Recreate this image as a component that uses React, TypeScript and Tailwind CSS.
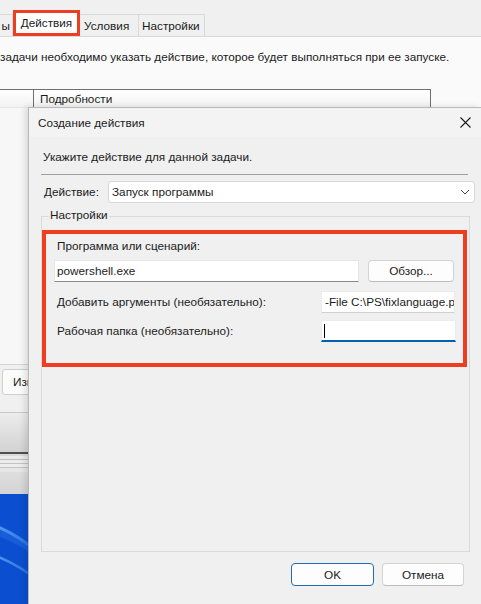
export default function App() {
  return (
    <div className="relative w-[481px] h-[604px] overflow-hidden bg-[#f0f0f0] text-[11.75px] leading-[16px] text-[#1b1b1b] font-['Liberation_Sans',Arial,sans-serif]">
      {/* Background window */}
      <div className="flex flex-col w-full h-full">
        {/* Tabs */}
        <div className="h-[37px] shrink-0 flex items-end border-b border-[#d9d9d9]">
          <div className="w-[13px] h-[22px] border-t border-r border-[#d9d9d9] flex items-center justify-end overflow-hidden">
            <span className="pr-[2px]">ы</span>
          </div>
          <div className="w-[67px] h-[26px] border-[3px] border-[#ef3d22] bg-white flex items-center justify-center">
            Действия
          </div>
          <div className="w-[59px] h-[22px] border-t border-r border-[#d9d9d9] flex items-center pl-[4px]">
            Условия
          </div>
          <div className="w-[66px] h-[22px] border-t border-r border-[#d9d9d9] flex items-center pl-[3px]">
            Настройки
          </div>
        </div>
        {/* Content panel */}
        <div className="h-[52px] shrink-0 bg-[#fafafa] pt-[12px] whitespace-nowrap">
          задачи необходимо указать действие, которое будет выполняться при ее запуске.
        </div>
        <div className="h-[275px] shrink-0 bg-[#fafafa]">
          <div className="w-[431px] h-full border-t border-r border-[#6f6f6f] bg-white flex flex-col">
            <div className="h-[18px] flex bg-gradient-to-b from-white to-[#f2f2f2] border-b border-[#e5e5e5]">
              <div className="w-[34px] border-r border-[#6f6f6f]" />
              <div className="pl-[6px] flex items-center">Подробности</div>
            </div>
            <div className="flex-1 bg-[#f7f7f7]" />
          </div>
        </div>
        <div className="h-[48px] shrink-0 bg-[#f0f0f0] border-t border-[#d5d5d5] pt-[4px] pl-[2px]">
          <div className="w-[90px] h-[26px] border border-[#cfcfcf] rounded-[3px] bg-[#fbfbfb] flex items-center pl-[10px]">
            Изменить...
          </div>
        </div>
        <div className="h-[40px] shrink-0 bg-gradient-to-b from-[#ececec] to-[#d2d2d2] border-t border-[#c9c9c9]" />
        <div className="h-[2px] shrink-0 bg-[#4e4e4e]" />
        <div className="h-[40px] shrink-0 bg-[#dadada] flex flex-col pt-[2px]">
          <div className="h-[3px] bg-[#e9e9e9]" />
          <div className="h-[1px] bg-[#bdbdbd]" />
          <div className="h-[3px] bg-[#ececec]" />
          <div className="h-[1px] bg-[#c2c2c2]" />
          <div className="h-[3px] bg-[#ececec]" />
          <div className="h-[1px] bg-[#c4c4c4]" />
          <div className="h-[4px] bg-[#e6e6e6]" />
          <div className="flex-1 bg-gradient-to-b from-[#dedede] to-[#d4d4d4]" />
        </div>
        <div className="flex-1 bg-[#0b4fd0] relative overflow-hidden">
          <svg width="481" height="110" viewBox="0 0 481 110" className="block">
            <defs>
              <linearGradient id="wg" x1="0" y1="0" x2="1" y2="0">
                <stop offset="0" stopColor="#6bb4f7" stopOpacity="0.85" />
                <stop offset="1" stopColor="#2f7fe8" stopOpacity="0.5" />
              </linearGradient>
            </defs>
            <path d="M-10 28 Q 15 36 40 58 L 40 66 Q 15 46 -10 40 Z" fill="#1d63dc" opacity="0.7" />
            <path d="M-10 30 Q 15 38 40 60" stroke="url(#wg)" strokeWidth="3" fill="none" />
            <path d="M-10 60 Q 15 68 40 88" stroke="url(#wg)" strokeWidth="2.5" fill="none" />
          </svg>
        </div>
      </div>

      {/* Dialog */}
      <div className="absolute left-[28px] top-[107px] w-[453px] h-[497px] bg-[#f0f0f0] border-l border-t border-[#b9b9b9] shadow-[-3px_0_6px_rgba(0,0,0,0.12)] flex flex-col">
        {/* Title bar */}
        <div className="h-[29px] shrink-0 flex items-center justify-between pl-[9px] bg-[#f3f3f3]">
          <span>Создание действия</span>
          <svg width="11" height="11" viewBox="0 0 11 11" className="mr-[10px]">
            <path d="M0.5 0.5 L10.5 10.5 M10.5 0.5 L0.5 10.5" stroke="#1b1b1b" strokeWidth="1.1" fill="none" />
          </svg>
        </div>
        <div className="mt-[12px] pl-[14px]">Укажите действие для данной задачи.</div>
        <div className="mt-[9px] ml-[12px] w-[427px] h-px bg-[#a0a0a0]" />
        {/* Action row */}
        <div className="mt-[6px] flex items-center h-[22px]">
          <div className="w-[79px] pl-[15px]">Действие:</div>
          <div className="w-[367px] h-[22px] bg-white border border-[#d6d6d6] rounded-[3px] flex items-center justify-between pl-[3px] pr-[4px]">
            <span>Запуск программы</span>
            <svg width="10" height="6" viewBox="0 0 10 6">
              <path d="M1 1 L5 5 L9 1" stroke="#444" strokeWidth="1" fill="none" />
            </svg>
          </div>
        </div>
        {/* Group box */}
        <div className="relative mt-[13px] ml-[12px] w-[429px] h-[336px] border border-[#dadada]">
          <div className="absolute left-[7px] top-[-10px] px-[1px] bg-[#f0f0f0]">Настройки</div>
          <div className="mt-[13px] w-[425px] h-[137px] border-4 border-[#ef3d22] flex flex-col">
            <div className="mt-[4px] pl-[11px]">Программа или сценарий:</div>
            <div className="mt-[6px] flex pl-[8px] gap-[9px]">
              <div className="w-[305px] h-[22px] bg-white border border-[#e6e6e6] border-b-[#8a8a8a] flex items-center pl-[2px]">
                powershell.exe
              </div>
              <div className="w-[86px] h-[22px] bg-[#fdfdfd] border border-[#d3d3d3] border-b-[#bdbdbd] rounded-[4px] flex items-center justify-center">
                Обзор...
              </div>
            </div>
            <div className="mt-[9px] flex items-center">
              <div className="w-[275px] pl-[11px]">Добавить аргументы (необязательно):</div>
              <div className="w-[134px] h-[22px] bg-white border border-[#ececec] border-b-[#d0d0d0] flex items-center pl-[3px] overflow-hidden whitespace-nowrap">
                -File C:\PS\fixlanguage.ps1
              </div>
            </div>
            <div className="mt-[7px] flex items-center">
              <div className="w-[275px] pl-[11px]">Рабочая папка (необязательно):</div>
              <div className="w-[135px] h-[22px] bg-white border border-[#ececec] border-b-2 border-b-[#005fb8] flex items-center pl-[2px]">
                <div className="w-px h-[14px] bg-[#000]" />
              </div>
            </div>
          </div>
        </div>
        {/* Buttons */}
        <div className="mt-[11px] flex justify-end gap-[8px] pr-[17px]">
          <div className="w-[83px] h-[23px] bg-[#fdfdfd] border border-[#1f6db5] rounded-[4px] flex items-center justify-center">
            OK
          </div>
          <div className="w-[82px] h-[23px] bg-[#fdfdfd] border border-[#d3d3d3] border-b-[#bdbdbd] rounded-[4px] flex items-center justify-center">
            Отмена
          </div>
        </div>
      </div>
    </div>
  );
}
